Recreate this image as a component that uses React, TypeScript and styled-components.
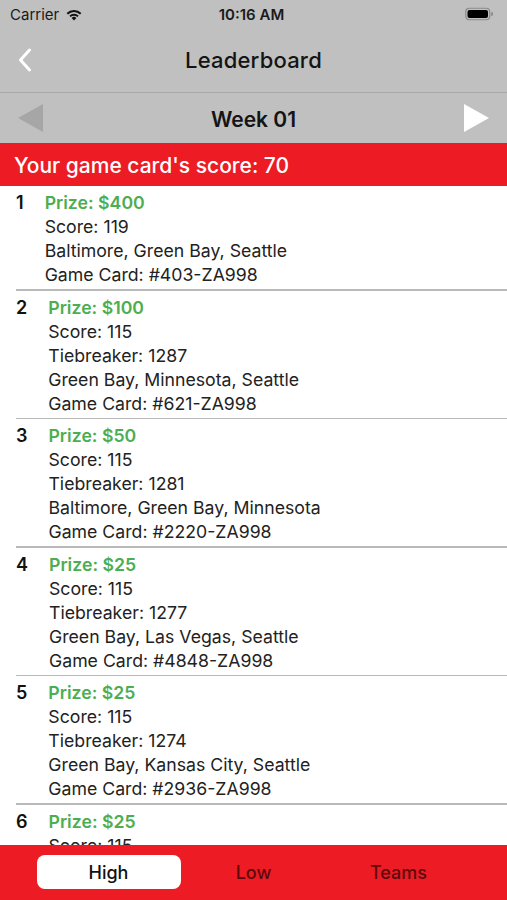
import React from "react";
import styled, { createGlobalStyle } from "styled-components";

const Global = createGlobalStyle`
  html, body { margin: 0; padding: 0; background: #ffffff; }
  body { font-family: Inter, "Noto Sans", "Liberation Sans", sans-serif; -webkit-font-smoothing: antialiased; }
  * { box-sizing: border-box; }
`;

const Screen = styled.div`
  width: 507px;
  height: 900px;
  display: flex;
  flex-direction: column;
  overflow: hidden;
  background: #ffffff;
`;

const Header = styled.div`
  background: #c0c0c0;
  display: flex;
  flex-direction: column;
`;

const StatusBar = styled.div`
  height: 28px;
  display: grid;
  grid-template-columns: 1fr auto 1fr;
  align-items: center;
  padding: 0 14px 0 10px;
  font-size: 15px;
  color: #1a1a1a;
`;

const Carrier = styled.div`
  display: flex;
  align-items: center;
  gap: 6px;
  font-size: 15px;
  font-weight: 400;
`;

const Clock = styled.div`
  font-weight: 600;
  font-size: 15px;
`;

const BatteryWrap = styled.div`
  justify-self: end;
  display: flex;
  align-items: center;
`;

const NavBar = styled.div`
  height: 65px;
  display: grid;
  grid-template-columns: 60px 1fr 60px;
  align-items: center;
  border-bottom: 1.5px solid #a9a9a9;
`;

const BackButton = styled.div`
  display: flex;
  align-items: center;
  padding-left: 18px;
`;

const Title = styled.div`
  text-align: center;
  font-size: 22px;
  font-weight: 500;
  color: #141414;
  letter-spacing: 0.2px;
`;

const WeekBar = styled.div`
  height: 50px;
  display: grid;
  grid-template-columns: 60px 1fr 60px;
  align-items: center;
`;

const WeekLabel = styled.div`
  text-align: center;
  font-size: 21px;
  font-weight: 600;
  color: #141414;
  padding-top: 2px;
`;

const Arrow = styled.div<{ $side: "left" | "right" }>`
  display: flex;
  align-items: center;
  justify-content: ${(p) => (p.$side === "left" ? "flex-start" : "flex-end")};
  padding: ${(p) => (p.$side === "left" ? "0 0 0 17px" : "0 17px 0 0")};
`;

const ScoreBanner = styled.div`
  height: 43px;
  background: #ed1c24;
  color: #ffffff;
  font-size: 21px;
  font-weight: 500;
  display: flex;
  align-items: center;
  padding: 2px 0 0 14px;
`;

const List = styled.div`
  flex: 1;
  overflow: hidden;
`;

const Entry = styled.div`
  display: flex;
  gap: 21px;
  padding: 5px 0 2px 16px;
`;

const Rank = styled.div`
  font-size: 18px;
  font-weight: 600;
  line-height: 24px;
  color: #111;
`;

const Details = styled.div`
  flex: 1;
  display: flex;
  flex-direction: column;
`;

const Line = styled.div<{ $prize?: boolean }>`
  font-size: 17.7px;
  line-height: 24px;
  font-weight: ${(p) => (p.$prize ? 600 : 400)};
  color: ${(p) => (p.$prize ? "#4cae50" : "#222")};
  white-space: nowrap;
`;

const Divider = styled.div`
  height: 1.5px;
  background: #b9b9b9;
  margin-left: 16px;
`;

const TabBar = styled.div`
  height: 55px;
  background: #ed1c24;
  display: grid;
  grid-template-columns: repeat(3, 144px);
  justify-content: center;
  column-gap: 1px;
  align-items: center;
  padding-bottom: 1px;
`;

const Tab = styled.div<{ $active?: boolean }>`
  height: 34px;
  border-radius: 8px;
  display: flex;
  align-items: center;
  justify-content: center;
  font-size: 18px;
  font-weight: 500;
  background: ${(p) => (p.$active ? "#ffffff" : "transparent")};
  color: ${(p) => (p.$active ? "#111" : "#5c0a0d")};
`;

type Item = { rank: number; prize: string; score: number; tiebreaker?: number; teams: string; card: string };

const items: Item[] = [
  { rank: 1, prize: "$400", score: 119, teams: "Baltimore, Green Bay, Seattle", card: "#403-ZA998" },
  { rank: 2, prize: "$100", score: 115, tiebreaker: 1287, teams: "Green Bay, Minnesota, Seattle", card: "#621-ZA998" },
  { rank: 3, prize: "$50", score: 115, tiebreaker: 1281, teams: "Baltimore, Green Bay, Minnesota", card: "#2220-ZA998" },
  { rank: 4, prize: "$25", score: 115, tiebreaker: 1277, teams: "Green Bay, Las Vegas, Seattle", card: "#4848-ZA998" },
  { rank: 5, prize: "$25", score: 115, tiebreaker: 1274, teams: "Green Bay, Kansas City, Seattle", card: "#2936-ZA998" },
  { rank: 6, prize: "$25", score: 115, tiebreaker: 1270, teams: "Green Bay, Las Vegas, Seattle", card: "#1102-ZA998" },
];

const Wifi = () => (
  <svg width="18" height="13" viewBox="0 0 18 13">
    <path d="M9 12.5 L6.6 10 A3.4 3.4 0 0 1 11.4 10 Z" fill="#111" />
    <path d="M4.3 7.7 A6.6 6.6 0 0 1 13.7 7.7 L12.3 9.1 A4.6 4.6 0 0 0 5.7 9.1 Z" fill="#111" />
    <path d="M1.6 5 A10.4 10.4 0 0 1 16.4 5 L15 6.4 A8.4 8.4 0 0 0 3 6.4 Z" fill="#111" />
  </svg>
);

const Battery = () => (
  <svg width="28" height="14" viewBox="0 0 28 14">
    <rect x="0.75" y="1.25" width="24" height="11.5" rx="3.5" fill="none" stroke="#8a8a8a" strokeWidth="1.2" />
    <rect x="2.5" y="3" width="20.5" height="8" rx="2" fill="#000" />
    <path d="M26.2 5 v4 a1.8 1.8 0 0 0 0 -4z" fill="#8a8a8a" />
  </svg>
);

export default function App() {
  return (
    <Screen>
      <Global />
      <Header>
        <StatusBar>
          <Carrier>
            Carrier <Wifi />
          </Carrier>
          <Clock>10:16 AM</Clock>
          <BatteryWrap>
            <Battery />
          </BatteryWrap>
        </StatusBar>
        <NavBar>
          <BackButton>
            <svg width="14" height="24" viewBox="0 0 14 24">
              <path d="M11.5 2 L2.5 12 L11.5 22" fill="none" stroke="#ffffff" strokeWidth="3" strokeLinecap="round" strokeLinejoin="round" />
            </svg>
          </BackButton>
          <Title>Leaderboard</Title>
          <div />
        </NavBar>
        <WeekBar>
          <Arrow $side="left">
            <svg width="27" height="30" viewBox="0 0 27 30">
              <path d="M26 1 L26 29 L1 15 Z" fill="#a6a6a6" />
            </svg>
          </Arrow>
          <WeekLabel>Week 01</WeekLabel>
          <Arrow $side="right">
            <svg width="27" height="30" viewBox="0 0 27 30">
              <path d="M1 1 L1 29 L26 15 Z" fill="#ffffff" />
            </svg>
          </Arrow>
        </WeekBar>
      </Header>
      <ScoreBanner>Your game card's score: 70</ScoreBanner>
      <List>
        {items.map((it) => (
          <React.Fragment key={it.rank}>
            <Entry>
              <Rank>{it.rank}</Rank>
              <Details>
                <Line $prize>Prize: {it.prize}</Line>
                <Line>Score: {it.score}</Line>
                {it.tiebreaker !== undefined && <Line>Tiebreaker: {it.tiebreaker}</Line>}
                <Line>{it.teams}</Line>
                <Line>Game Card: {it.card}</Line>
              </Details>
            </Entry>
            <Divider />
          </React.Fragment>
        ))}
      </List>
      <TabBar>
        <Tab $active>High</Tab>
        <Tab>Low</Tab>
        <Tab>Teams</Tab>
      </TabBar>
    </Screen>
  );
}
